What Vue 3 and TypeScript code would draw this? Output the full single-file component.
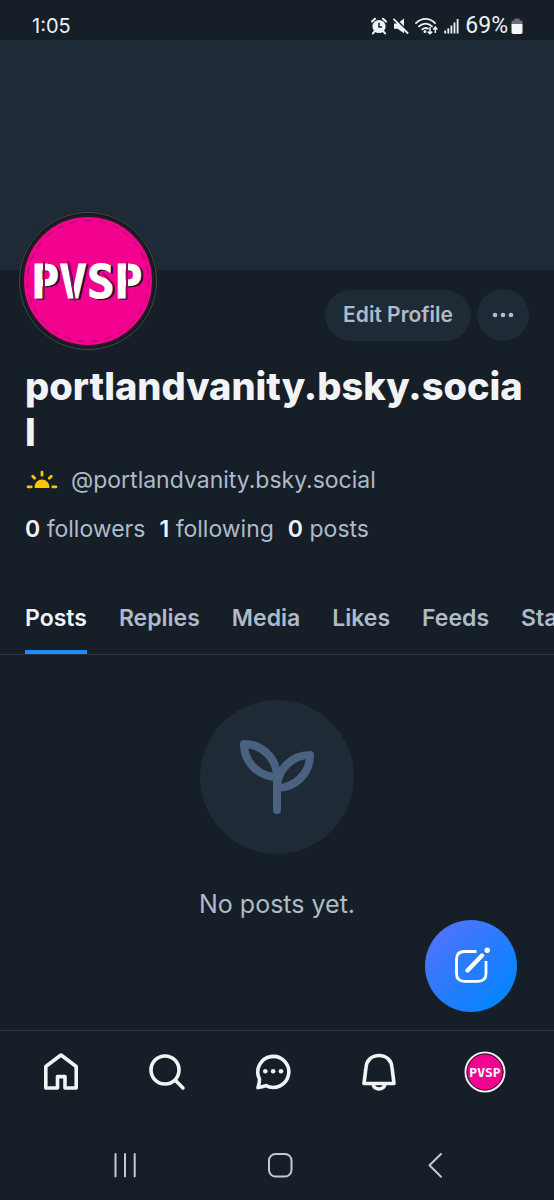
<script setup lang="ts">
import { ref } from 'vue'

interface Stat {
  count: number
  label: string
}

const handle = 'portlandvanity.bsky.social'
const stats: Stat[] = [
  { count: 0, label: 'followers' },
  { count: 1, label: 'following' },
  { count: 0, label: 'posts' },
]
const tabs: string[] = ['Posts', 'Replies', 'Media', 'Likes', 'Feeds', 'Starter Packs']
const activeTab = ref<string>('Posts')
</script>

<template>
  <div class="screen">
    <div class="status">
      <span class="clock">1:05</span>
      <div class="status-icons">
        <svg width="16" height="18" viewBox="0 0 16 18" aria-label="Alarm">
          <circle cx="8" cy="9.5" r="6.6" fill="#eef1f5" />
          <path d="M1 4.6 4 1.8M15 4.6 12 1.8M3.4 14.6 2 16.4M12.6 14.6 14 16.4" stroke="#eef1f5" stroke-width="2" stroke-linecap="round" />
          <path d="M8 5.8V10h3" fill="none" stroke="#161e27" stroke-width="1.5" />
        </svg>
        <svg width="16" height="18" viewBox="0 0 16 18" aria-label="Muted">
          <path d="M1 6.5h3.6L11 1.6v14.6L4.6 11.8H1z" fill="#eef1f5" />
          <path d="M1.6 1.2 16 15.6" stroke="#161e27" stroke-width="2" />
          <path d="M1 2.4 14.6 16" stroke="#eef1f5" stroke-width="1.8" stroke-linecap="round" />
        </svg>
        <svg width="23" height="18" viewBox="0 0 23 18" aria-label="Wi-Fi">
          <path d="M1 6.2C6.5 .4 14.5 .4 20 6.2M4 9.4c3.8-3.8 9.2-3.8 13 0M7.3 12.4c2-1.7 3.8-1.8 5.6-.8" fill="none" stroke="#eef1f5" stroke-width="1.8" stroke-linecap="round" />
          <circle cx="10" cy="14.4" r="1.5" fill="#eef1f5" />
          <path d="M15 10v6.6M12.8 14.6 15 16.8l2.200-2.200M20.300 16v-5.600M18.200 12.400l2.100-2.200 2.100 2.200" fill="none" stroke="#eef1f5" stroke-width="1.5" />
        </svg>
        <svg width="15" height="18" viewBox="0 0 15 18" aria-label="Signal">
          <path d="M1.2 13.6V16.5M4.3 11.3V16.5M7.4 8.5V16.5M10.5 5.5V16.5M13.6 2V16.5" stroke="#eef1f5" stroke-width="1.8" />
        </svg>
        <span class="percent">69%</span>
        <svg class="battery" width="12" height="18" viewBox="0 0 12 18" aria-label="Battery">
          <path d="M3.5 1.5h5v2h1.700q1.300 0 1.300 1.300V8H.5V4.800q0-1.300 1.300-1.300h1.700z" fill="#6b7178" />
          <path d="M.5 7h11v8.200q0 1.800-1.800 1.800H2.300Q.5 17 .5 15.200z" fill="#f4f6f8" />
        </svg>
      </div>
    </div>

    <div class="banner"></div>

    <header class="profile">
      <div class="top-row">
        <svg class="avatar" viewBox="0 0 140 140" role="img" aria-label="Profile picture">
          <circle cx="70" cy="70" r="69.500" fill="#161e27" />
          <circle cx="70" cy="70" r="68.500" fill="#17191f" stroke="#3f4a50" stroke-width="1" />
          <circle cx="70" cy="70" r="65" fill="#f2028e" stroke="#231c26" stroke-width="2" />
          <circle cx="70" cy="70" r="60.500" fill="none" stroke="#a80c6a" stroke-width="1" stroke-dasharray="8 6" />
          <text class="logo-text" x="71" y="88" text-anchor="middle" fill="#25101f" stroke="#25101f">PVSP</text>
          <text class="logo-text" x="69" y="87" text-anchor="middle" fill="#ffffff" stroke="#ffffff">PVSP</text>
          <path d="M26 50V88M109 50V88M50 50 57 90M85 62 96 74" fill="none" stroke="#8d0b5a" stroke-width="2" />
        </svg>
        <div class="actions">
          <button class="edit" type="button">Edit Profile</button>
          <button class="more" type="button" aria-label="More options">
            <svg width="24" height="24" viewBox="0 0 24 24" fill="#aebbc9">
              <circle cx="4" cy="12" r="2.300" /><circle cx="12" cy="12" r="2.300" /><circle cx="20" cy="12" r="2.300" />
            </svg>
          </button>
        </div>
      </div>
      <h1>{{ handle }}</h1>
      <div class="handle">
        <svg width="34" height="22" viewBox="0 0 34 22" aria-hidden="true">
          <path d="M9.500 18a7.500 7.500 0 0 1 15 0q0 1-1 1h-13q-1 0-1-1z" fill="#ffc404" />
          <path d="M17 3.200v3M7.700 7.200l2 2M26.300 7.200l-2 2M3 17.800h3.200M27.800 17.800H31" stroke="#ffc404" stroke-width="2.800" stroke-linecap="round" />
        </svg>
        <span>@{{ handle }}</span>
      </div>
      <div class="stats">
        <a v-for="s in stats" :key="s.label" href="#"><strong>{{ s.count }}</strong> {{ s.label }}</a>
      </div>
    </header>

    <nav class="tabs" aria-label="Profile sections">
      <button
        v-for="t in tabs"
        :key="t"
        type="button"
        class="tab"
        :class="{ active: t === activeTab }"
        @click="activeTab = t"
      >{{ t }}</button>
    </nav>

    <main class="feed">
      <div class="empty-icon">
        <svg width="88" height="88" viewBox="0 0 24 24" fill="none" stroke="#4a617f" stroke-width="2.200" stroke-linejoin="round" stroke-linecap="round">
          <path d="M12 21v-9a9 9 0 0 0-9-9v0a9 9 0 0 0 9 9" />
          <path d="M12 15a9 9 0 0 1 9-9v0a9 9 0 0 1-9 9" />
        </svg>
      </div>
      <p>No posts yet.</p>
      <button class="compose" type="button" aria-label="New post">
        <svg width="40" height="40" viewBox="0 0 40 40" fill="none" stroke="#ffffff">
          <path d="M25.500 5.500H13.500Q5.500 5.500 5.500 13.500V27.500Q5.500 35.300 13.500 35.300H27Q35 35.300 35 27.500V15" stroke-width="2.800" />
          <path d="M16.500 24.500 31 9.500" stroke-width="4.400" stroke-linecap="round" />
          <path d="M31.800 6 34.600 8.800" stroke="#2c79fb" stroke-width="1" />
          <circle cx="36.200" cy="4.300" r="2.700" fill="#ffffff" stroke="none" />
        </svg>
      </button>
    </main>

    <nav class="bottom-nav" aria-label="Main">
      <a href="#" aria-label="Home">
        <svg width="40" height="40" viewBox="0 0 40 40">
          <path d="M4.800 14.500 20 3l15.200 11.500V36H24V24.600h-7.500V36H4.800z" />
        </svg>
      </a>
      <a href="#" aria-label="Search">
        <svg width="40" height="40" viewBox="0 0 40 40">
          <circle cx="18" cy="18" r="14" /><path d="M28.500 28.500 36 36" />
        </svg>
      </a>
      <a href="#" aria-label="Chat">
        <svg width="40" height="40" viewBox="0 0 40 40">
          <path d="M6.500 27A15.500 15.500 0 1 1 13 33.600Q9.500 34.800 5 35.600Q6.600 31 6.500 27z" />
          <g class="dots"><circle cx="12.300" cy="19.300" r="2.300" /><circle cx="20.100" cy="19.300" r="2.300" /><circle cx="28" cy="19.300" r="2.300" /></g>
        </svg>
      </a>
      <a href="#" aria-label="Notifications">
        <svg width="40" height="40" viewBox="0 0 40 40">
          <path d="M20 3.500C12.500 3.500 7.500 8.500 7 15.500L5 31.500H35L33 15.500C32.500 8.500 27.500 3.500 20 3.500z" />
          <path d="M14 32.500Q15.500 37 20 37T26 32.500" />
        </svg>
      </a>
      <a href="#" aria-label="Profile">
        <svg class="mini" width="42" height="42" viewBox="0 0 42 42">
          <circle cx="21" cy="21" r="19.500" fill="#f2028e" stroke="#f1f3f5" stroke-width="2" />
          <circle cx="21" cy="21" r="18" fill="none" stroke="#2c1727" stroke-width="1" />
          <text class="mini-text" x="21" y="26" text-anchor="middle">PVSP</text>
        </svg>
      </a>
    </nav>

    <div class="system-nav">
      <button type="button" aria-label="Recent apps">
        <svg width="28" height="28" viewBox="0 0 28 28"><path d="M4.500 3v22.500M14 3v22.500M23.700 3v22.500" /></svg>
      </button>
      <button type="button" aria-label="Home screen">
        <svg width="28" height="28" viewBox="0 0 28 28"><rect x="3" y="3" width="22.500" height="22.500" rx="6.500" /></svg>
      </button>
      <button type="button" aria-label="Back">
        <svg width="28" height="28" viewBox="0 0 28 28"><path d="M20 3 8.500 14.300 20 25.700" /></svg>
      </button>
    </div>
  </div>
</template>

<style>
body {
  margin: 0;
  background: #161e27;
}
</style>

<style scoped>
.screen {
  display: flex;
  flex-direction: column;
  min-height: 100vh;
  background: #161e27;
  color: #aebbc9;
  font-family: Inter, 'Liberation Sans', sans-serif;
  font-size: 23px;
  line-height: 30px;
  overflow: hidden;
}
button {
  margin: 0;
  padding: 0;
  border: 0;
  background: none;
  color: inherit;
  font: inherit;
  cursor: pointer;
}
a {
  color: inherit;
  text-decoration: none;
}
svg {
  display: block;
  flex: none;
}
.status {
  display: flex;
  align-items: center;
  justify-content: space-between;
  box-sizing: border-box;
  height: 40px;
  padding: 12px 31px 0 32px;
  color: #eef1f5;
  line-height: 28px;
}
.clock {
  font-size: 20px;
}
.percent {
  font-family: Roboto, sans-serif;
}
.status-icons {
  display: flex;
  align-items: center;
  gap: 6px;
}
.battery {
  margin-left: -3px;
}
.banner {
  height: 230px;
  background: #1e2a35;
}
.profile {
  padding: 0 25px;
}
.top-row {
  display: flex;
  justify-content: space-between;
  height: 93px;
}
.avatar {
  width: 140px;
  height: 140px;
  margin: -59px 0 0 -7px;
}
.logo-text {
  font-family: 'DejaVu Sans Mono', monospace;
  font-size: 46px;
  font-weight: 700;
  stroke-width: 1px;
}
.actions {
  display: flex;
  align-items: center;
  gap: 6px;
  height: 52px;
  padding-top: 19px;
}
.edit {
  height: 51px;
  padding: 0 18px;
  border-radius: 26px;
  background: #1e2a35;
  font-size: 21px;
  font-weight: 600;
}
.more {
  display: grid;
  place-items: center;
  width: 52px;
  height: 52px;
  border-radius: 50%;
  background: #1e2a35;
}
h1 {
  margin: 0;
  color: #f1f3f5;
  font-size: 38px;
  font-weight: 800;
  line-height: 46px;
  word-break: break-all;
}
.handle {
  display: flex;
  align-items: center;
  gap: 12px;
  margin: 10px 0 19px;
}
.stats {
  display: flex;
  gap: 14px;
}
.stats strong {
  color: #f1f3f5;
  font-weight: 600;
}
.tabs {
  display: flex;
  gap: 32px;
  margin-top: 38px;
  padding-left: 25px;
  border-bottom: 1px solid #2a3541;
  overflow: hidden;
}
.tab {
  flex: none;
  padding: 21px 0 17px;
  border-bottom: 4px solid transparent;
  font-weight: 600;
  white-space: nowrap;
}
.tab.active {
  border-color: #208bfe;
  color: #f1f3f5;
}
.feed {
  position: relative;
  display: flex;
  flex: 1;
  flex-direction: column;
  align-items: center;
  padding-top: 45px;
}
.empty-icon {
  display: grid;
  place-items: center;
  width: 154px;
  height: 154px;
  border-radius: 50%;
  background: #1e2a35;
}
.feed p {
  margin: 35px 0 0;
  font-size: 25px;
}
.compose {
  position: absolute;
  right: 37px;
  bottom: 18px;
  display: grid;
  place-items: center;
  width: 92px;
  height: 92px;
  border-radius: 50%;
  background: linear-gradient(135deg, #5a71fa 0%, #0085ff 90%);
}
.bottom-nav {
  display: grid;
  grid-template-columns: repeat(5, 1fr);
  justify-items: center;
  align-items: center;
  height: 82px;
  padding: 0 16px 0 8px;
  border-top: 1px solid #2a3541;
}
.bottom-nav svg {
  fill: none;
  stroke: #f1f3f5;
  stroke-width: 3.6;
  stroke-linejoin: round;
  stroke-linecap: round;
}
.bottom-nav .dots {
  fill: #f1f3f5;
  stroke: none;
}
.bottom-nav .mini {
  stroke-width: 1;
}
.mini-text {
  fill: #ffffff;
  stroke: none;
  font-family: 'DejaVu Sans Mono', monospace;
  font-size: 13px;
  font-weight: 700;
}
.system-nav {
  display: flex;
  justify-content: center;
  gap: 127px;
  padding: 38px 0 21px 6px;
}
.system-nav svg {
  fill: none;
  stroke: #c3c9d0;
  stroke-width: 2;
  stroke-linecap: round;
  stroke-linejoin: round;
}
</style>
